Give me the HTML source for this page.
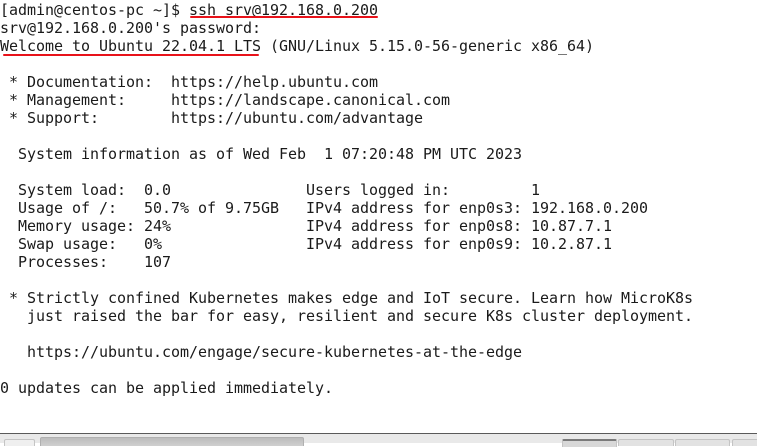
<!DOCTYPE html>
<html><head><meta charset="utf-8"><style>
html,body{margin:0;padding:0;width:757px;height:442px;overflow:hidden;background:#fff;}
pre{margin:0;position:absolute;left:0;top:1px;font-family:"DejaVu Sans Mono","Liberation Mono",monospace;font-size:15px;line-height:18px;color:#1a1a1a;letter-spacing:-0.03px;}
.u{position:absolute;height:2px;background:#e8121a;border-radius:1px;}
.bar{position:absolute;left:0;top:433px;width:757px;height:9px;background:#e9e9e9;border-top:1px solid #5a5a5a;}
.b{position:absolute;top:5px;height:6px;border:1px solid #c4c4c4;border-bottom:none;background:#e2e2e2;border-radius:2px 2px 0 0;}
</style></head><body>
<pre>[admin@centos-pc ~]$ ssh srv@192.168.0.200
srv@192.168.0.200's password:
Welcome to Ubuntu 22.04.1 LTS (GNU/Linux 5.15.0-56-generic x86_64)

 * Documentation:  https://help.ubuntu.com
 * Management:     https://landscape.canonical.com
 * Support:        https://ubuntu.com/advantage

  System information as of Wed Feb  1 07:20:48 PM UTC 2023

  System load:  0.0               Users logged in:         1
  Usage of /:   50.7% of 9.75GB   IPv4 address for enp0s3: 192.168.0.200
  Memory usage: 24%               IPv4 address for enp0s8: 10.87.7.1
  Swap usage:   0%                IPv4 address for enp0s9: 10.2.87.1
  Processes:    107

 * Strictly confined Kubernetes makes edge and IoT secure. Learn how MicroK8s
   just raised the bar for easy, resilient and secure K8s cluster deployment.

   https://ubuntu.com/engage/secure-kubernetes-at-the-edge

0 updates can be applied immediately.
</pre>
<div class="u" style="left:190px;top:16px;width:188px;"></div>
<div class="u" style="left:3px;top:54px;width:256px;"></div>
<div class="bar">
<div class="b" style="left:4px;width:29px;background:#efefef;"></div>
<div class="b" style="left:40px;width:262px;top:3px;height:8px;background:linear-gradient(#bdbdbd,#cfcfcf);border-color:#b0b0b0;"></div>
<div class="b" style="left:562px;width:53px;background:#d8d8d8;border-top:2px solid #7a7a7a;"></div>
<div class="b" style="left:618px;width:54px;"></div>
<div class="b" style="left:675px;width:53px;"></div>
<div class="b" style="left:732px;width:30px;"></div>
</div>
</body></html>
